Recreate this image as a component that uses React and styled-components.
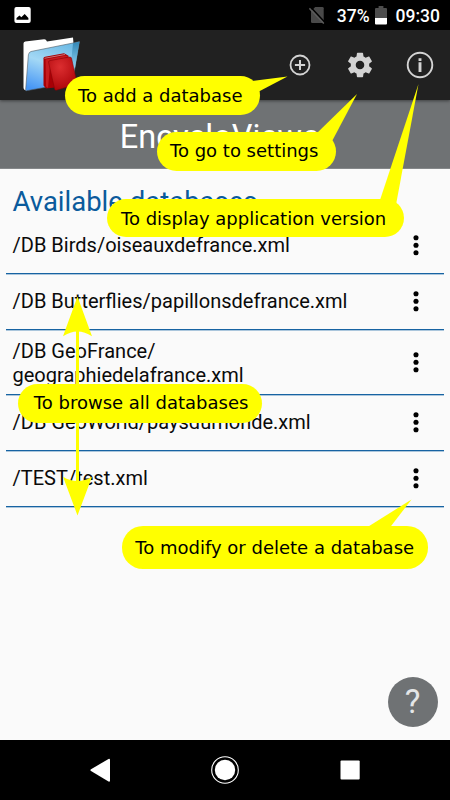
import React from "react";
import styled, { createGlobalStyle } from "styled-components";

const GlobalStyle = createGlobalStyle`
  * { box-sizing: border-box; }
  body { margin: 0; background: #fafafa; }
  svg { display: block; }
`;

const Screen = styled.div`
  position: relative;
  width: 450px;
  height: 800px;
  display: flex;
  flex-direction: column;
  overflow: hidden;
  background: #fafafa;
  font-family: Roboto, sans-serif;
  color: #0a0a0a;
`;

const StatusBar = styled.div`
  flex: none;
  height: 30px;
  padding: 0 10px 0 14px;
  display: flex;
  align-items: center;
  background: #000;
  color: #fff;
`;

const StatusRight = styled.div`
  margin-left: auto;
  display: flex;
  align-items: center;
`;

const StatusText = styled.span`
  font-size: 17.5px;
  line-height: 30px;
  font-weight: 500;
  margin: 2px ${(p) => p.$right}px 0 ${(p) => p.$left}px;
`;

const AppBar = styled.div`
  flex: none;
  position: relative;
  height: 70px;
  padding-left: 20px;
  display: flex;
  align-items: center;
  background: #212121;
  box-shadow: 0 1px 3px rgba(0, 0, 0, 0.45);
`;

const Actions = styled.div`
  margin-left: auto;
  display: flex;
`;

const ActionButton = styled.button`
  width: 60px;
  height: 60px;
  padding: 0;
  border: 0;
  display: grid;
  place-items: center;
  background: none;
  color: #d3d3d3;
`;

const Banner = styled.h1`
  flex: none;
  height: 69px;
  margin: 0;
  padding-top: 2px;
  border-bottom: 1px solid #85888a;
  background: #6f7274;
  color: #fff;
  font-size: 32.5px;
  font-weight: 400;
  line-height: 70px;
  text-align: center;
`;

const Heading = styled.h2`
  flex: none;
  height: 49px;
  margin: 0;
  padding: 17px 12.5px 0;
  color: #0a5a9c;
  font-size: 27.5px;
  font-weight: 400;
  line-height: 32px;
`;

const List = styled.ul`
  flex: 1;
  margin: 0;
  padding: 0 6px;
  list-style: none;
`;

const Row = styled.li`
  height: ${(p) => (p.$tall ? 64.4 : 56.2)}px;
  padding: 0 25px ${(p) => (p.$tall ? 0 : 1)}px 6.5px;
  display: flex;
  align-items: center;
  justify-content: space-between;
  border-bottom: 1px solid #1763a2;
  box-shadow: 0 1px 0 rgba(23, 99, 162, 0.35);
`;

const RowLabel = styled.span`
  font-size: 20.02px;
  line-height: 23.6px;
  padding-top: ${(p) => (p.$tall ? 4 : 2)}px;
  white-space: pre-line;
`;

const HelpButton = styled.button`
  flex: none;
  align-self: flex-end;
  width: 50px;
  height: 50px;
  margin: 0 12.5px 13px 0;
  padding: 0;
  border: 0;
  border-radius: 50%;
  background: #6f7274;
  color: #e4e6e7;
  font: 400 33px/50px Roboto, sans-serif;
`;

const NavBar = styled.nav`
  flex: none;
  height: 60px;
  display: flex;
  align-items: center;
  justify-content: space-between;
  padding: 0 87px;
  background: #000;
`;

const Guides = styled.div`
  position: absolute;
  inset: 0;
  pointer-events: none;
`;

const Bubble = styled.div`
  position: absolute;
  left: ${(p) => p.$x}px;
  top: ${(p) => p.$y}px;
  width: ${(p) => p.$w}px;
  height: ${(p) => p.$h}px;
  padding-left: ${(p) => p.$pad}px;
  border-radius: 21px;
  background: #ff0;
  color: #000;
  font-family: "DejaVu Sans", sans-serif;
  font-size: 18px;
  line-height: ${(p) => p.$h + (p.$drop || 0)}px;
  white-space: nowrap;
`;

const PointerLayer = styled.svg`
  position: absolute;
  inset: 0;
`;

const ImageIcon = () => (
  <svg width="17" height="16" viewBox="0 0 17 16">
    <rect x="0.4" y="0" width="16.3" height="16" rx="2" fill="#fff" />
    <path d="M2.5 12.700V11L5.500 8.500l1.800 1.800L10.700 7l3.700 4v1.700z" fill="#000" />
  </svg>
);

const NoSimIcon = () => (
  <svg width="17" height="18" viewBox="0 0 17 18">
    <path d="M6.2 1h7.2q1.3 0 1.3 1.3v13.4q0 1.3-1.3 1.3H3.3Q2 17 2 15.700V5.200z" fill="#494949" />
    <path d="M1.500 1 16 16.500" stroke="#000" strokeWidth="1.600" />
    <path d="M0.400 2.300 14.800 17.600" stroke="#5b5b5b" strokeWidth="1.400" />
  </svg>
);

const BatteryIcon = () => (
  <svg width="12" height="19" viewBox="0 0 12 19">
    <path d="M3.600 0h4.800v2H11q1 0 1 1v9H0V3q0-1 1-1h2.600z" fill="#4d4d4d" />
    <path d="M0 12h12v5.500q0 1-1 1H1q-1 0-1-1z" fill="#fff" />
  </svg>
);

const FolderIcon = () => (
  <svg width="60" height="60" viewBox="20 35 60 60">
    <defs>
      <linearGradient id="folder" x1="0.6" y1="0" x2="0.2" y2="1">
        <stop offset="0" stopColor="#70bce6" />
        <stop offset="0.45" stopColor="#a3d8f5" />
        <stop offset="1" stopColor="#4595f5" />
      </linearGradient>
      <linearGradient id="edge" x1="0" y1="0" x2="0" y2="1">
        <stop offset="0" stopColor="#3387b6" />
        <stop offset="1" stopColor="#8dd1f2" />
      </linearGradient>
      <radialGradient id="cover" cx="0.4" cy="0.3" r="0.8">
        <stop offset="0" stopColor="#dc2e30" />
        <stop offset="1" stopColor="#a70005" />
      </radialGradient>
    </defs>
    <path d="M23.500 43.500q0-1.600 1.700-2L44 39.200q2-.2 3 2.200L73 37.400l.5 6-42 10L27 90.500q-3.500 0-3.500-3z" fill="#fff" />
    <path d="M31 51.500 73 43l6.500-1.500-7 41-46 8.200q-1 0-.8-1.500l2.700-34.500Q29 52 31 51.500z" fill="url(#folder)" stroke="#4e5963" strokeWidth="0.600" />
    <path d="M73 43.200 79.500 41.800 75 68l-4-5z" fill="url(#edge)" />
    <path d="M43.500 58.300q0-1.200 1.500-1.500L64 53.300l4.500 2.500V86L46 88.500l-2.500-3z" fill="#a80006" />
    <path d="M45.500 59.500 66 55.500l2.500 1.500-18 4-2.500 27-2-1.500z" fill="#c61c20" />
    <path d="M44.500 58.300 65 54.500" stroke="#dda5a5" strokeWidth="0.700" />
    <path d="M48.500 62q0-1 1.300-1.400L69.500 57q1.500-.2 2 1l5.700 26-21 6.300q-1 .1-1.500-1z" fill="url(#cover)" stroke="#850004" strokeWidth="0.500" />
  </svg>
);

const AddIcon = () => (
  <svg width="22" height="22" viewBox="0 0 22 22" fill="none" stroke="currentColor">
    <circle cx="11" cy="11" r="9.500" strokeWidth="1.800" />
    <path d="M5.900 11h10.200M11 5.900v10.200" strokeWidth="2" />
  </svg>
);

const GearIcon = () => (
  <svg width="30" height="30" viewBox="-0.250 -0.250 24.500 24.500" fill="currentColor">
    <path d="M19.430 12.980c.04-.32.07-.64.07-.98s-.03-.66-.07-.98l2.110-1.650c.19-.15.24-.42.12-.64l-2-3.460c-.12-.22-.39-.3-.61-.22l-2.490 1c-.52-.4-1.080-.73-1.690-.98l-.38-2.650C14.460 2.180 14.250 2 14 2h-4c-.25 0-.46.18-.49.42l-.38 2.650c-.61.25-1.170.59-1.690.98l-2.490-1c-.23-.09-.49 0-.61.22l-2 3.460c-.13.22-.07.49.12.64l2.110 1.650c-.04.32-.07.65-.07.98s.03.66.07.98l-2.110 1.650c-.19.15-.24.42-.12.64l2 3.460c.12.22.39.3.61.22l2.490-1c.52.4 1.080.73 1.690.98l.38 2.650c.03.24.24.42.49.42h4c.25 0 .46-.18.49-.42l.38-2.650c.61-.25 1.170-.59 1.690-.98l2.490 1c.23.09.49 0 .61-.22l2-3.460c.12-.22.07-.49-.12-.64l-2.110-1.650zM12 15.500c-1.930 0-3.500-1.570-3.500-3.500s1.570-3.500 3.500-3.500 3.500 1.570 3.500 3.500-1.570 3.500-3.500 3.500z" />
  </svg>
);

const InfoIcon = () => (
  <svg width="28" height="28" viewBox="0 0 28 28" fill="none" stroke="currentColor">
    <circle cx="14" cy="14" r="12.300" strokeWidth="1.900" />
    <path d="M14 11.300V21M14 7.300v2.600" strokeWidth="2.900" />
  </svg>
);

const MoreIcon = () => (
  <svg width="6" height="22" viewBox="0 0 6 22">
    <circle cx="3" cy="3.700" r="2.550" />
    <circle cx="3" cy="11.200" r="2.550" />
    <circle cx="3" cy="18.700" r="2.550" />
  </svg>
);

const BackIcon = () => (
  <svg width="26" height="26" viewBox="0 0 26 26">
    <path d="M4 12.200 21.500 2q1.300-.5 1.500.7v21q-.2 1.300-1.500.8L4 14q-1.400-.9 0-1.800z" fill="#fff" />
  </svg>
);

const HomeIcon = () => (
  <svg width="28" height="28" viewBox="0 0 28 28">
    <circle cx="14" cy="14" r="13.300" fill="none" stroke="#fff" strokeWidth="1.100" />
    <circle cx="14" cy="14" r="10.200" fill="#fff" />
  </svg>
);

const RecentIcon = () => (
  <svg width="26" height="20" viewBox="0 0 26 20">
    <rect x="3.500" y="0.400" width="19.200" height="19.200" rx="1" fill="#fff" />
  </svg>
);

const databases = [
  { label: "/DB Birds/oiseauxdefrance.xml" },
  { label: "/DB Butterflies/papillonsdefrance.xml" },
  { label: "/DB GeoFrance/\ngeographiedelafrance.xml", tall: true },
  { label: "/DB GeoWorld/paysdumonde.xml" },
  { label: "/TEST/test.xml" },
];

export default function App() {
  return (
    <>
      <GlobalStyle />
      <Screen>
        <StatusBar>
          <ImageIcon />
          <StatusRight>
            <NoSimIcon />
            <StatusText $left={11} $right={5}>37%</StatusText>
            <BatteryIcon />
            <StatusText $left={9} $right={0}>09:30</StatusText>
          </StatusRight>
        </StatusBar>
        <AppBar>
          <FolderIcon />
          <Actions>
            <ActionButton aria-label="Add database"><AddIcon /></ActionButton>
            <ActionButton aria-label="Settings"><GearIcon /></ActionButton>
            <ActionButton aria-label="Version"><InfoIcon /></ActionButton>
          </Actions>
        </AppBar>
        <Banner>EncycloViewer</Banner>
        <Heading>Available databases</Heading>
        <List>
          {databases.map(({ label, tall }) => (
            <Row key={label} $tall={tall}>
              <RowLabel $tall={tall}>{label}</RowLabel>
              <MoreIcon />
            </Row>
          ))}
        </List>
        <HelpButton>?</HelpButton>
        <NavBar>
          <BackIcon />
          <HomeIcon />
          <RecentIcon />
        </NavBar>
        <Guides>
          <PointerLayer width="450" height="800" viewBox="0 0 450 800" fill="#ff0">
            <path d="M250 81.300 287.500 76.500 256 93z" />
            <path d="M316 134 357 94 330 145z" />
            <path d="M380 200 418.500 84 395 210z" />
            <path d="M366 528 411.500 499.500 388 530z" />
            <path d="M76 325h3v160h-3z" />
            <path d="M77.500 296.500 92 336.300Q77.500 326.700 63 336.300z" />
            <path d="M77.500 515.500 92 476.700Q77.500 485.300 63 476.700z" />
          </PointerLayer>
          <Bubble $x={65} $y={75.500} $w={195} $h={39} $pad={13}>To add a database</Bubble>
          <Bubble $x={157} $y={132} $w={178.500} $h={38.500} $pad={13}>To go to settings</Bubble>
          <Bubble $x={107} $y={198.700} $w={296.500} $h={38.600} $pad={14} $drop={0.8}>To display application version</Bubble>
          <Bubble $x={18.300} $y={384} $w={244} $h={38.500} $pad={15.500}>To browse all databases</Bubble>
          <Bubble $x={122.300} $y={526} $w={306} $h={42.500} $pad={13} $drop={0.8}>To modify or delete a database</Bubble>
        </Guides>
      </Screen>
    </>
  );
}
